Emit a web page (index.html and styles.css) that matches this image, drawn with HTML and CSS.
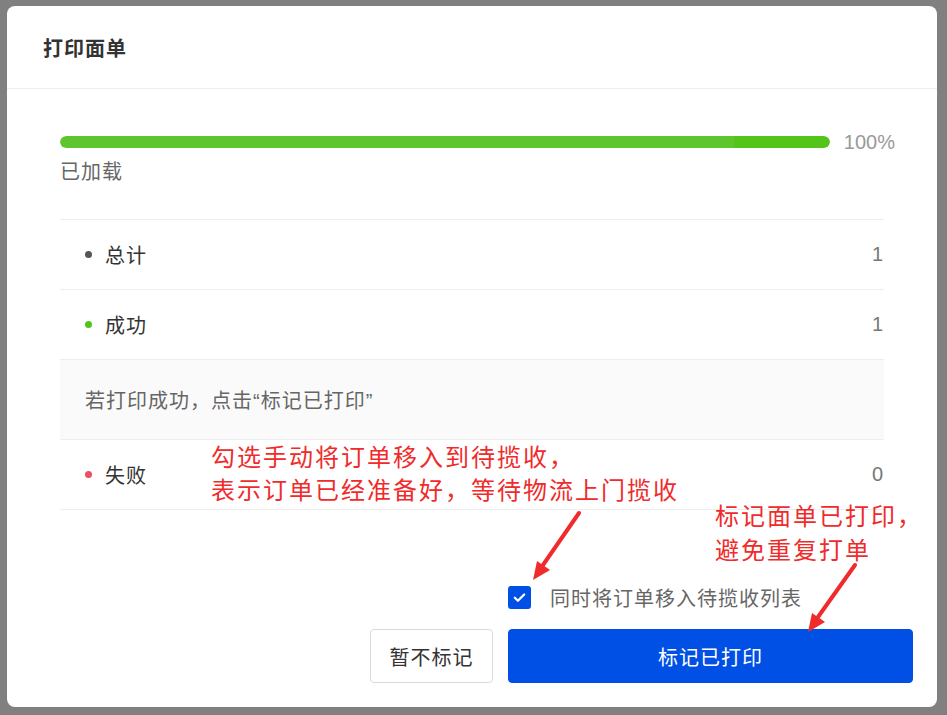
FILE: index.html
```html
<!DOCTYPE html>
<html lang="zh-CN">
<head>
    <meta charset="UTF-8">
    <meta name="viewport" content="width=device-width, initial-scale=1.0">
    <title>打印面单</title>
    <link rel="stylesheet" href="styles.css">
</head>
<body>

    <div class="mask">
        <div class="modal">
            <div class="modal-header">
                <h1>打印面单</h1>
            </div>

            <div class="modal-body">
                <div class="progress-row">
                    <div class="progress-track">
                        <div class="progress-bar" style="width: 100%"></div>
                    </div>
                    <span class="progress-text">100%</span>
                </div>
                <div class="progress-status">已加载</div>

                <div class="result-list">
                    <div class="result-row">
                        <span class="dot dot-total"></span>
                        <span class="result-label">总计</span>
                        <span class="result-value">1</span>
                    </div>
                    <div class="result-row">
                        <span class="dot dot-success"></span>
                        <span class="result-label">成功</span>
                        <span class="result-value">1</span>
                    </div>
                    <div class="result-tip">若打印成功，点击“标记已打印”</div>
                    <div class="result-row">
                        <span class="dot dot-fail"></span>
                        <span class="result-label">失败</span>
                        <span class="result-value">0</span>
                    </div>
                </div>
            </div>

            <div class="modal-footer">
                <label class="check-row">
                    <span class="checkbox">
                        <svg width="15" height="15" viewBox="0 0 16 16">
                            <path d="M3 8.2l3.3 3.2L13 4.8" fill="none" stroke="#fff" stroke-width="2.4" stroke-linecap="round" stroke-linejoin="round"/>
                        </svg>
                    </span>
                    <span class="check-text">同时将订单移入待揽收列表</span>
                </label>
                <button class="btn btn-default">暂不标记</button>
                <button class="btn btn-primary">标记已打印</button>
            </div>

            <!-- 标注 -->
            <div class="note note-move">勾选手动将订单移入到待揽收，<br>表示订单已经准备好，等待物流上门揽收</div>
            <div class="note note-mark">标记面单已打印，<br>避免重复打单</div>
            <svg class="note-arrows" width="930" height="701" viewBox="0 0 930 701">
                <line x1="572" y1="507" x2="536" y2="559" stroke="#f02b2b" stroke-width="4" stroke-linecap="round"/>
                <polygon points="526,574 543,564 530,555" fill="#f02b2b"/>
                <line x1="848" y1="559" x2="811" y2="611" stroke="#f02b2b" stroke-width="4" stroke-linecap="round"/>
                <polygon points="801,626 818,616 805,607" fill="#f02b2b"/>
            </svg>
        </div>
    </div>

</body>
</html>
```

FILE: styles.css
```css
body {
    margin: 0;
    font-family: "Liberation Sans", "Noto Sans CJK SC", sans-serif;
    letter-spacing: 1px;
    background-color: #808080;
}
.mask {
    width: 947px;
    height: 715px;
    padding: 6px 0 0 7px;
    box-sizing: border-box;
}
.modal {
    position: relative;
    width: 930px;
    height: 701px;
    background: white;
    border-radius: 8px;
    display: flex;
    flex-direction: column;
}
.modal-header {
    height: 82px;
    padding: 0 36px;
    border-bottom: 1px solid #eeeeee;
    display: flex;
    align-items: center;
}
.modal-header h1 {
    margin: 0;
    font-size: 20px;
    font-weight: 700;
    color: #333;
}
.modal-body {
    padding: 39px 53px 0 53px;
}
.progress-row {
    display: flex;
    align-items: center;
    gap: 14px;
    height: 28px;
    margin-right: -11px;
}
.progress-track {
    flex: 1;
    height: 12px;
    background: #f0f0f0;
    border-radius: 6px;
    overflow: hidden;
}
.progress-bar {
    height: 100%;
    border-radius: 6px;
    background: linear-gradient(to right, #5ec52e 0, #5ec52e 87.5%, #52c41a 87.5%);
}
.progress-text {
    font-size: 20px;
    letter-spacing: 0;
    color: #999;
}
.progress-status {
    margin-top: 2px;
    line-height: 28px;
    font-size: 20px;
    color: #666;
}
.result-list {
    margin-top: 33px;
    border-top: 1px solid #eeeeee;
}
.result-row {
    height: 70px;
    box-sizing: border-box;
    padding: 0 1px 0 25px;
    border-bottom: 1px solid #eeeeee;
    display: flex;
    align-items: center;
    font-size: 20px;
}
.dot {
    width: 7px;
    height: 7px;
    border-radius: 50%;
    margin-right: 13px;
}
.dot-total {
    background: #555;
}
.dot-success {
    background: #52c41a;
}
.dot-fail {
    background: #ef4d63;
}
.result-label {
    flex: 1;
    color: #333;
}
.result-value {
    letter-spacing: 0;
    color: #777;
}
.result-tip {
    height: 80px;
    box-sizing: border-box;
    padding-left: 25px;
    background: #fafafa;
    border-bottom: 1px solid #eeeeee;
    display: flex;
    align-items: center;
    font-size: 20px;
    color: #666;
}
.modal-footer {
    margin-top: auto;
    padding: 0 24px 24px 0;
    display: grid;
    grid-template-columns: 123px 405px;
    justify-content: end;
    column-gap: 15px;
    row-gap: 20px;
}
.check-row {
    grid-column: 2;
    display: flex;
    align-items: center;
    gap: 19px;
    height: 23px;
}
.checkbox {
    width: 23px;
    height: 23px;
    border-radius: 3px;
    background: #0050e6;
    display: flex;
    align-items: center;
    justify-content: center;
}
.check-text {
    font-size: 20px;
    color: #666;
}
.btn {
    height: 54px;
    border-radius: 4px;
    font-family: inherit;
    font-size: 20px;
    letter-spacing: 1px;
    cursor: pointer;
}
.btn-default {
    grid-column: 1;
    background: white;
    border: 1px solid #d9d9d9;
    color: #333;
}
.btn-primary {
    grid-column: 2;
    background: #0050e6;
    border: 1px solid #0050e6;
    color: white;
}
.note {
    position: absolute;
    font-size: 24px;
    letter-spacing: 2px;
    color: #f02b2b;
}
.note-move {
    left: 204px;
    top: 435px;
    line-height: 33px;
}
.note-mark {
    left: 708px;
    top: 494px;
    line-height: 34px;
}
.note-arrows {
    position: absolute;
    left: 0;
    top: 0;
    pointer-events: none;
}
```
